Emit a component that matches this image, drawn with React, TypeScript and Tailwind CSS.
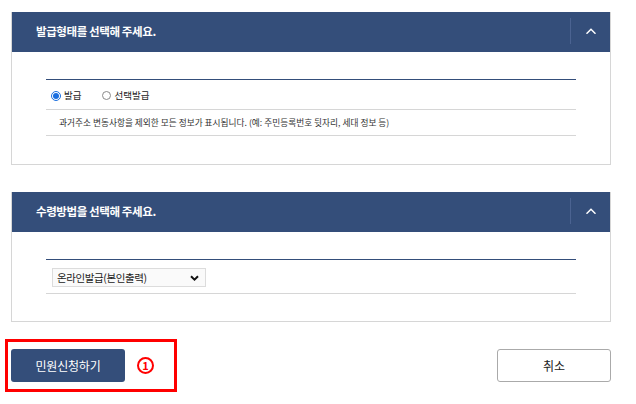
const NAVY = "bg-[#344e7a]";

function Chevron() {
  return (
    <svg width="10" height="6" viewBox="0 0 10 6" fill="none" aria-hidden>
      <path d="M1 5.2 L5 1.2 L9 5.2" stroke="#ffffff" strokeWidth="1.5" strokeLinecap="square" />
    </svg>
  );
}

function PanelHeader({ title }: { title: string }) {
  return (
    <div className={`${NAVY} h-[40px] flex items-center`}>
      <h2 className="flex-1 pl-[24px] text-white text-[11.5px] font-bold tracking-[-0.4px]">{title}</h2>
      <span className="w-px h-[26px] bg-[#4b6391] -mt-[2px]" />
      <button className="w-[39px] h-full flex items-center justify-center pb-[2px]">
        <Chevron />
      </button>
    </div>
  );
}

function Radio({ checked, label }: { checked?: boolean; label: string }) {
  return (
    <label className="flex items-center gap-[3px] text-[9.5px] text-[#222]">
      {checked ? (
        <span className="w-[10px] h-[10px] rounded-full border border-[#1a6fe0] flex items-center justify-center">
          <span className="w-[6px] h-[6px] rounded-full bg-[#1a6fe0]" />
        </span>
      ) : (
        <span className="w-[9px] h-[9px] rounded-full border border-[#8a8a8a]" />
      )}
      {label}
    </label>
  );
}

export default function App() {
  return (
    <div
      className="w-[636px] h-[404px] bg-white relative"
      style={{ fontFamily: '"Noto Sans CJK KR", "Noto Sans", sans-serif' }}
    >
      <div className="w-[600px] ml-[11px] pt-[12px] flex flex-col gap-[27px]">
        <section className="border-x border-b border-[#d6d6d6]">
          <PanelHeader title="발급형태를 선택해 주세요." />
          <div className="px-[34px] pt-[27px] pb-[28px]">
            <div className="border-t border-[#344e7a]">
              <div className="h-[30px] flex items-center gap-[21px] pl-[5px] pt-[2px] border-b border-[#d6d6d6]">
                <Radio checked label="발급" />
                <Radio label="선택발급" />
              </div>
              <p className="h-[26px] flex items-center pl-[13px] text-[8.7px] text-[#333] border-b border-[#d6d6d6]">
                과거주소 변동사항을 제외한 모든 정보가 표시됩니다. (예: 주민등록번호 뒷자리, 세대 정보 등)
              </p>
            </div>
          </div>
        </section>

        <section className="border-x border-b border-[#d6d6d6]">
          <PanelHeader title="수령방법을 선택해 주세요." />
          <div className="px-[34px] pt-[27px] pb-[27px]">
            <div className="border-t border-[#344e7a]">
              <div className="h-[34px] flex items-center pl-[6px] pt-[2px] border-b border-[#d6d6d6]">
                <div className="w-[154px] h-[19px] border border-[#dcdcdc] bg-[#fafafa] flex items-center justify-between pl-[4px] pr-[6px] text-[10.5px] text-[#222] tracking-[-0.4px]">
                  <span>온라인발급(본인출력)</span>
                  <svg width="9" height="6" viewBox="0 0 9 6" aria-hidden>
                    <path d="M1 1.2 L4.5 4.6 L8 1.2" stroke="#111" strokeWidth="2" fill="none" />
                  </svg>
                </div>
              </div>
            </div>
          </div>
        </section>

        <div className="flex items-center justify-between">
          <div className="flex items-center gap-[12px]">
            <button className={`${NAVY} w-[114px] h-[33px] rounded-[3px] text-white text-[12px] tracking-[-0.2px]`}>
              민원신청하기
            </button>
            <span className="w-[17px] h-[17px] rounded-full border-2 border-[#ff0000] flex items-center justify-center text-[#ff0000] text-[11px] font-bold leading-none">
              1
            </span>
          </div>
          <button className="w-[114px] h-[33px] rounded-[3px] border border-[#aaaaaa] bg-white text-[#222] text-[12px]">
            취소
          </button>
        </div>
      </div>

      <div className="absolute left-[5px] top-[339px] w-[172px] h-[53px] border-[3px] border-[#ff0000]" />
    </div>
  );
}
